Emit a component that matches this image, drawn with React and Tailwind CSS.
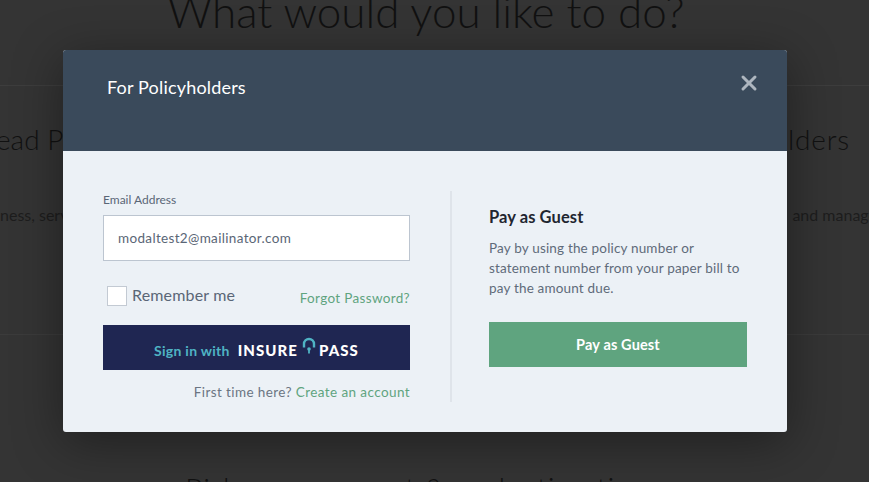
import { X } from 'lucide-react';

function InsurePassLogo() {
  return (
    <span className="flex items-end text-[15px] leading-[18px] font-black tracking-[0.07em] text-white">
      INSURE
      <svg viewBox="0 0 14 18" className="ml-[4px] mr-[3px] mb-[4px] w-[14px] h-[18px]" aria-hidden="true">
        <path d="M2 10.5V7a5 5 0 0 1 10 0v3.5" fill="none" stroke="#4fb3c4" strokeWidth="2.4" />
        <circle cx="7" cy="12" r="1.8" fill="#4fb3c4" />
        <rect x="6.1" y="12.5" width="1.8" height="4" fill="#4fb3c4" />
      </svg>
      PASS
    </span>
  );
}

function LoginForm() {
  return (
    <div className="w-[349px] shrink-0 pr-10 border-r-2 border-[#dfe4ea]">
      <label className="block pt-[2px] text-[12px] leading-[14px] text-[#5a6676]">Email Address</label>
      <input
        readOnly
        value="modaltest2@mailinator.com"
        className="mt-2 w-full h-[46px] px-[14px] bg-white border border-[#bcc5d0] text-[13.5px] tracking-[0.025em] text-[#5a6676] outline-none"
      />
      <div className="mt-[25px] flex items-end justify-between">
        <label className="ml-1 flex items-center gap-[5px] text-[16px] leading-[18px] tracking-[0.01em] text-[#5a6676]">
          <span className="w-5 h-5 bg-white border border-[#c3cad3]" />
          <span className="-mt-[2px]">Remember me</span>
        </label>
        <a className="text-[13.5px] leading-[16px] tracking-[0.025em] text-[#5fa47f]">Forgot Password?</a>
      </div>
      <button className="mt-[19px] w-full h-[45px] bg-[#1f2652] flex items-center justify-center gap-2">
        <span className="mt-[5px] text-[14px] font-bold tracking-[0.02em] text-[#4fb3c4]">Sign in with</span>
        <InsurePassLogo />
      </button>
      <p className="mt-[14px] text-right text-[13.5px] leading-[17px] tracking-[0.03em] text-[#6b7582]">
        First time here? <a className="text-[#5fa47f]">Create an account</a>
      </p>
    </div>
  );
}

function GuestPanel() {
  return (
    <div className="flex-1 pl-[37px] pt-[17px]">
      <h3 className="text-[16.5px] leading-[18px] font-bold tracking-[0.005em] text-[#1f2630]">Pay as Guest</h3>
      <p className="mt-3 text-[13.5px] leading-[20px] tracking-[0.013em] text-[#5f6b7a]">
        Pay by using the policy number or statement number from your paper bill to pay the amount due.
      </p>
      <button className="mt-6 w-full h-[45px] bg-[#5fa47f] text-white text-[14.5px] font-bold tracking-[0.01em]">
        Pay as Guest
      </button>
    </div>
  );
}

export default function App() {
  return (
    <div className="relative w-[869px] h-[482px] overflow-hidden bg-[#343434] font-['Lato',sans-serif]">
      {/* page behind the modal */}
      <div className="text-[#111111]">
        <h1 className="-mt-[17px] h-[103px] pr-[17px] text-center text-[44px] leading-[56px] font-light border-b border-[#3d3d3d]">
          What would you like to do?
        </h1>
        <div className="mt-9 flex justify-between text-[28px] leading-[34px] font-light">
          <span className="-ml-[4px]">ead Policies</span>
          <span className="mr-[19px] tracking-[0.03em]">Policyholders</span>
        </div>
        <div className="mt-[50px] flex justify-between text-[16px] leading-[18px] text-[#1d1d1d]">
          <span>ness, services</span>
          <span className="-mr-2">and manage</span>
        </div>
        <div className="mt-[110px] border-t border-[#3b3b3b]" />
        <p className="mt-[136px] pr-10 text-center text-[30.5px] leading-[36px] font-light">Risk management &amp; evaluation tips</p>
      </div>

      {/* modal */}
      <div className="absolute inset-0 pt-[50px] pl-[63px]">
        <div className="w-[724px] h-[382px] rounded-[3px] overflow-hidden bg-[#ecf1f6] shadow-[0_10px_50px_rgba(0,0,0,0.4)]">
          <div className="h-[101px] bg-[#3a4a5b] pl-[44px] pr-[26px] pt-[24px] flex justify-between items-start">
            <h2 className="text-[18px] leading-[26px] tracking-[0.01em] text-white">For Policyholders</h2>
            <X className="w-[24px] h-[24px] -mt-[3px] text-[#aeb6bf]" strokeWidth={3} />
          </div>
          <div className="flex pl-[40px] pr-[40px] pt-[40px] h-[251px]">
            <LoginForm />
            <GuestPanel />
          </div>
        </div>
      </div>
    </div>
  );
}
